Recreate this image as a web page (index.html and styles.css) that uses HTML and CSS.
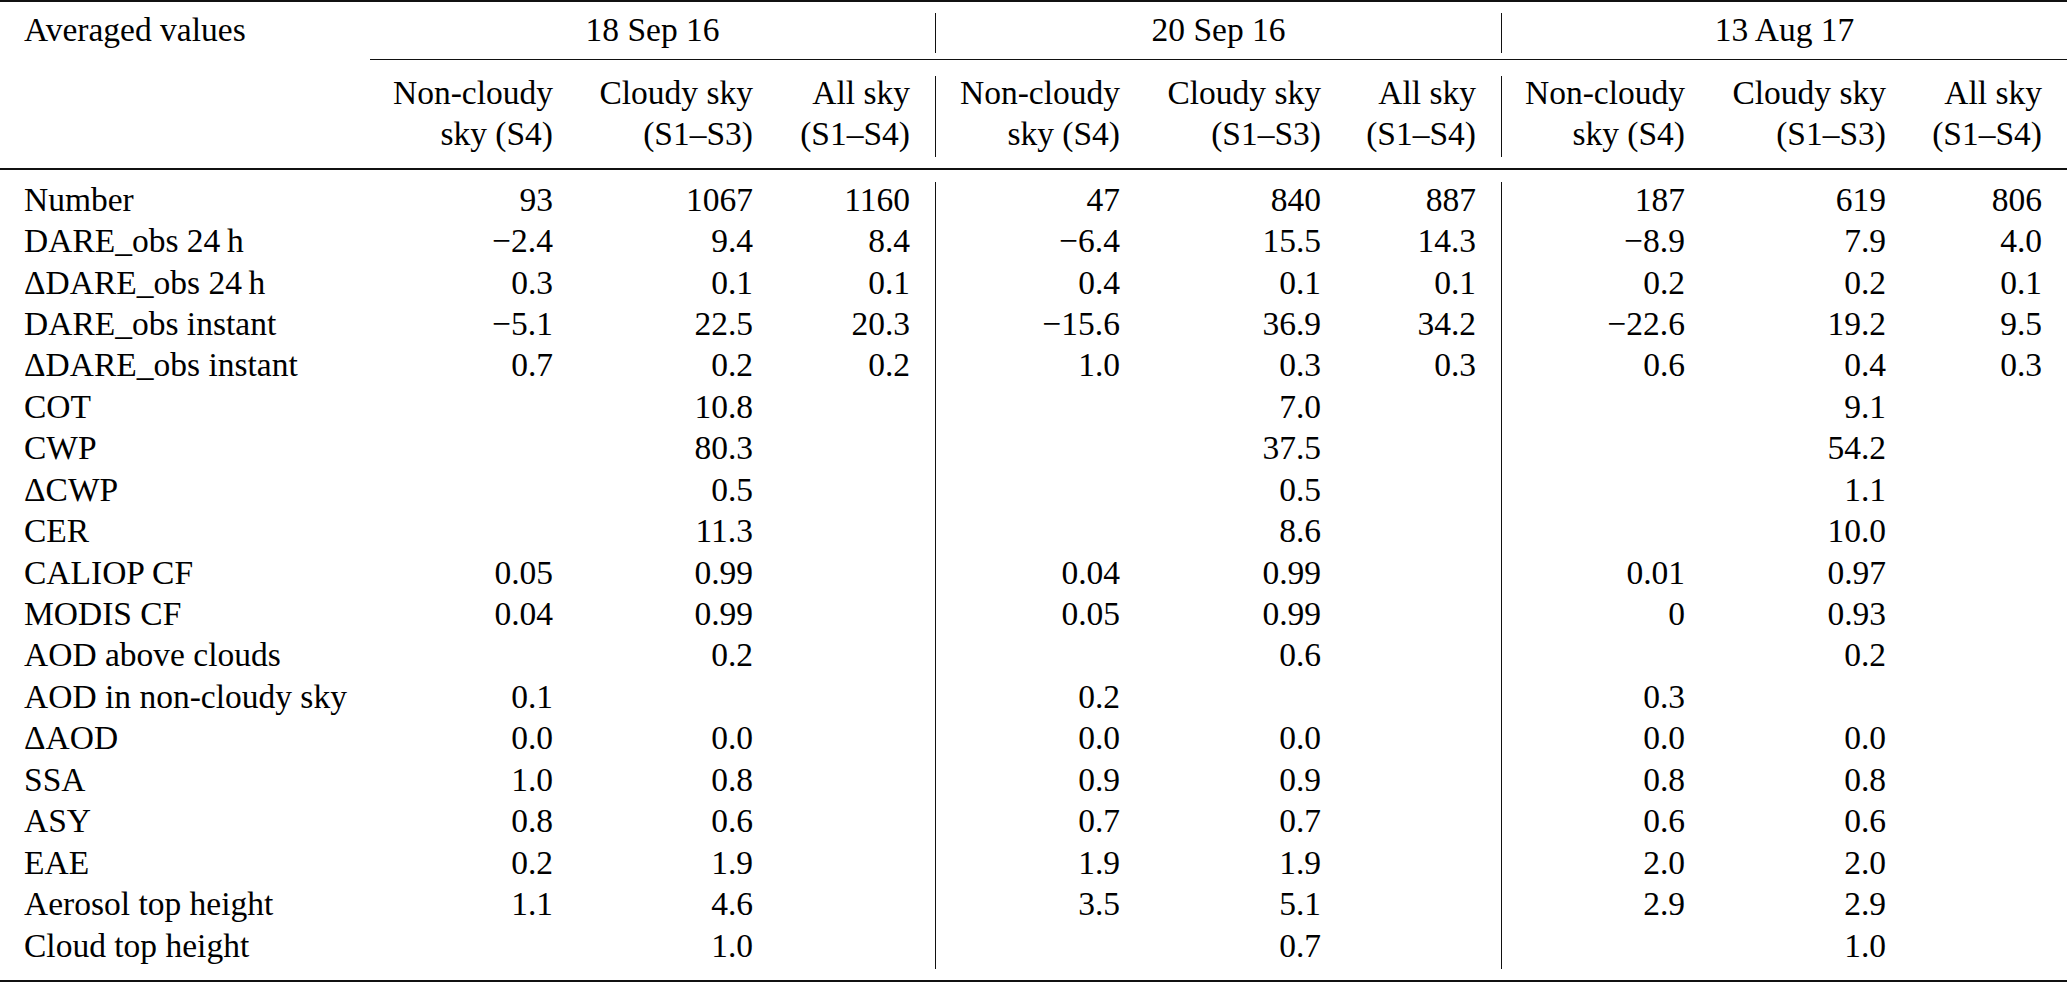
FILE: index.html
```html
<!DOCTYPE html>
<html lang="en">
<head>
<meta charset="utf-8">
<title>Averaged values</title>
<link rel="stylesheet" href="styles.css">
</head>
<body>
<div class="tbl">
  <div class="rule-top"></div>

  <div class="row h1">
    <div class="lab">Averaged values</div>
    <div class="grp">18 Sep 16</div>
    <div class="grp v">20 Sep 16</div>
    <div class="grp v">13 Aug 17</div>
  </div>

  <div class="cmid"></div>

  <div class="h2">
    <div class="row ha">
      <div class="lab"></div>
      <div>Non-cloudy</div><div>Cloudy sky</div><div class="e">All sky</div>
      <div class="v">Non-cloudy</div><div>Cloudy sky</div><div class="e">All sky</div>
      <div class="v">Non-cloudy</div><div>Cloudy sky</div><div class="e">All sky</div>
    </div>
    <div class="row hb">
      <div class="lab"></div>
      <div>sky (S4)</div><div>(S1&#8211;S3)</div><div class="e">(S1&#8211;S4)</div>
      <div class="v">sky (S4)</div><div>(S1&#8211;S3)</div><div class="e">(S1&#8211;S4)</div>
      <div class="v">sky (S4)</div><div>(S1&#8211;S3)</div><div class="e">(S1&#8211;S4)</div>
    </div>
  </div>

  <div class="mid"></div>

  <div class="body">
    <div class="row"><div class="lab">Number</div><div>93</div><div>1067</div><div class="e">1160</div><div class="v">47</div><div>840</div><div class="e">887</div><div class="v">187</div><div>619</div><div class="e">806</div></div>
    <div class="row"><div class="lab">DARE_obs 24&#8201;h</div><div>&#8722;2.4</div><div>9.4</div><div class="e">8.4</div><div class="v">&#8722;6.4</div><div>15.5</div><div class="e">14.3</div><div class="v">&#8722;8.9</div><div>7.9</div><div class="e">4.0</div></div>
    <div class="row"><div class="lab">&#916;DARE_obs 24&#8201;h</div><div>0.3</div><div>0.1</div><div class="e">0.1</div><div class="v">0.4</div><div>0.1</div><div class="e">0.1</div><div class="v">0.2</div><div>0.2</div><div class="e">0.1</div></div>
    <div class="row"><div class="lab">DARE_obs instant</div><div>&#8722;5.1</div><div>22.5</div><div class="e">20.3</div><div class="v">&#8722;15.6</div><div>36.9</div><div class="e">34.2</div><div class="v">&#8722;22.6</div><div>19.2</div><div class="e">9.5</div></div>
    <div class="row"><div class="lab">&#916;DARE_obs instant</div><div>0.7</div><div>0.2</div><div class="e">0.2</div><div class="v">1.0</div><div>0.3</div><div class="e">0.3</div><div class="v">0.6</div><div>0.4</div><div class="e">0.3</div></div>
    <div class="row"><div class="lab">COT</div><div></div><div>10.8</div><div class="e"></div><div class="v"></div><div>7.0</div><div class="e"></div><div class="v"></div><div>9.1</div><div class="e"></div></div>
    <div class="row"><div class="lab">CWP</div><div></div><div>80.3</div><div class="e"></div><div class="v"></div><div>37.5</div><div class="e"></div><div class="v"></div><div>54.2</div><div class="e"></div></div>
    <div class="row"><div class="lab">&#916;CWP</div><div></div><div>0.5</div><div class="e"></div><div class="v"></div><div>0.5</div><div class="e"></div><div class="v"></div><div>1.1</div><div class="e"></div></div>
    <div class="row"><div class="lab">CER</div><div></div><div>11.3</div><div class="e"></div><div class="v"></div><div>8.6</div><div class="e"></div><div class="v"></div><div>10.0</div><div class="e"></div></div>
    <div class="row"><div class="lab">CALIOP CF</div><div>0.05</div><div>0.99</div><div class="e"></div><div class="v">0.04</div><div>0.99</div><div class="e"></div><div class="v">0.01</div><div>0.97</div><div class="e"></div></div>
    <div class="row"><div class="lab">MODIS CF</div><div>0.04</div><div>0.99</div><div class="e"></div><div class="v">0.05</div><div>0.99</div><div class="e"></div><div class="v">0</div><div>0.93</div><div class="e"></div></div>
    <div class="row"><div class="lab">AOD above clouds</div><div></div><div>0.2</div><div class="e"></div><div class="v"></div><div>0.6</div><div class="e"></div><div class="v"></div><div>0.2</div><div class="e"></div></div>
    <div class="row"><div class="lab">AOD in non-cloudy sky</div><div>0.1</div><div></div><div class="e"></div><div class="v">0.2</div><div></div><div class="e"></div><div class="v">0.3</div><div></div><div class="e"></div></div>
    <div class="row"><div class="lab">&#916;AOD</div><div>0.0</div><div>0.0</div><div class="e"></div><div class="v">0.0</div><div>0.0</div><div class="e"></div><div class="v">0.0</div><div>0.0</div><div class="e"></div></div>
    <div class="row"><div class="lab">SSA</div><div>1.0</div><div>0.8</div><div class="e"></div><div class="v">0.9</div><div>0.9</div><div class="e"></div><div class="v">0.8</div><div>0.8</div><div class="e"></div></div>
    <div class="row"><div class="lab">ASY</div><div>0.8</div><div>0.6</div><div class="e"></div><div class="v">0.7</div><div>0.7</div><div class="e"></div><div class="v">0.6</div><div>0.6</div><div class="e"></div></div>
    <div class="row"><div class="lab">EAE</div><div>0.2</div><div>1.9</div><div class="e"></div><div class="v">1.9</div><div>1.9</div><div class="e"></div><div class="v">2.0</div><div>2.0</div><div class="e"></div></div>
    <div class="row"><div class="lab">Aerosol top height</div><div>1.1</div><div>4.6</div><div class="e"></div><div class="v">3.5</div><div>5.1</div><div class="e"></div><div class="v">2.9</div><div>2.9</div><div class="e"></div></div>
    <div class="row"><div class="lab">Cloud top height</div><div></div><div>1.0</div><div class="e"></div><div class="v"></div><div>0.7</div><div class="e"></div><div class="v"></div><div>1.0</div><div class="e"></div></div>
  </div>

  <div class="rule-bot"></div>
</div>
</body>
</html>
```
FILE: styles.css
```css
html, body {
  margin: 0;
  padding: 0;
  background: #fff;
}

body {
  font-family: "Liberation Serif", "Times New Roman", serif;
  font-size: 33.5px;
  color: #000;
}

.tbl {
  width: 2067px;
}

/* horizontal rules */
.rule-top {
  height: 2px;
  background: #111;
}

.cmid {
  height: 1.3px;
  background: #111;
  margin: 6.3px 0 0 370px;
}

.mid {
  height: 1.3px;
  background: #111;
  margin-top: 11.1px;
}

.rule-bot {
  height: 2px;
  background: #111;
  margin-top: 10.75px;
}

/* rows */
.row {
  display: grid;
  grid-template-columns: 370px 183px 200px 182px 185px 201px 180px 184px 201px 181px;
}

.row > div {
  text-align: right;
  white-space: nowrap;
}

.row > .lab {
  text-align: left;
  padding-left: 24px;
}

.row > .e {
  padding-right: 25px;
}

.row > .v {
  border-left: 1px solid #111;
}

.row > .grp {
  grid-column: span 3;
  text-align: center;
}

/* header line 1 */
.h1 {
  margin-top: 10.7px;
}

.h1 > div {
  line-height: 33.38px;
  padding-bottom: 6.62px;
}

/* header lines 2 and 3 */
.h2 {
  margin-top: 15.7px;
}

.ha > div {
  line-height: 33.38px;
  padding-bottom: 6.62px;
}

.hb > div {
  line-height: 35.38px;
  padding-bottom: 6.05px;
}

/* body */
.body {
  margin-top: 11.9px;
}

.body .row > div {
  line-height: 35.41px;
  padding-bottom: 6.04px;
}
```
